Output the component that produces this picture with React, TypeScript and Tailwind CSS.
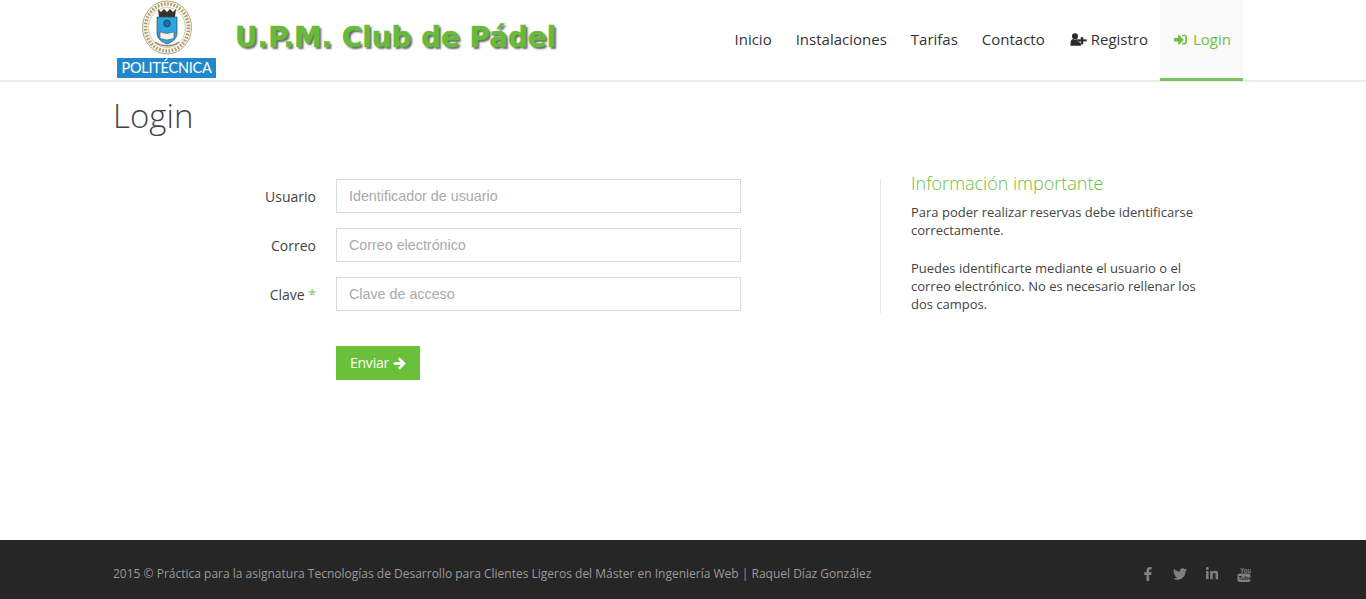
import React from "react";
import { FaSignInAlt, FaArrowRight, FaFacebookF, FaTwitter, FaLinkedinIn } from "react-icons/fa";

function Seal() {
  return (
    <svg width="52" height="56" viewBox="0 0 52 56" className="block">
      <ellipse cx="26" cy="27.5" rx="24.5" ry="26.5" fill="#f8f5ea" stroke="#b3a77f" strokeWidth="1" />
      <ellipse cx="26" cy="27.5" rx="21.5" ry="23.5" fill="none" stroke="#a89c74" strokeWidth="3.4" strokeDasharray="1.6 1.6" />
      <ellipse cx="26" cy="27.5" rx="18.4" ry="20" fill="#fff" stroke="#c2b893" strokeWidth="0.7" />
      <path d="M17 9 L20 12 L23 9 L26 12 L29 9 L32 12 L35 9 L34 17 L18 17 Z" fill="#33322f" />
      <path d="M16 17 H36 V33 C36 39 31 42 26 44 C21 42 16 39 16 33 Z" fill="#2ea3dc" stroke="#2b4a5e" strokeWidth="0.7" />
      <circle cx="26" cy="23.5" r="3.4" fill="#1f6f96" stroke="#17465f" strokeWidth="0.8" />
      <path d="M19 32 L26 33.5 L33 32 V38.5 L26 40 L19 38.5 Z" fill="#f2f2ee" stroke="#555" strokeWidth="0.6" />
      <path d="M14 42 C20 47 32 47 38 42" fill="none" stroke="#8a887c" strokeWidth="1.4" />
    </svg>
  );
}

function UserPlus() {
  return (
    <svg width="17" height="13" viewBox="0 0 17 13" className="block" fill="#2a2a2a">
      <circle cx="5" cy="3.2" r="3" />
      <path d="M0.5 12.8 V10 C0.5 7.6 2 6 3.4 6 Q5 7.4 6.8 6 C8 6 9 6.8 9.6 7.8 V10 H11 V12.8 Z" />
      <path d="M10.7 4 H13.3 V6.2 H16.8 V8.6 H13.3 V11.4 H10.7 V8.6 H7.5 V6.2 H10.7 Z" stroke="#fff" strokeWidth="0.2" />
    </svg>
  );
}

function YoutubeLogo() {
  return (
    <svg width="14" height="15" viewBox="0 0 14 15" className="block" fill="currentColor">
      <text x="3" y="5.6" fontSize="6.5" fontWeight="700" fontFamily="'Liberation Sans', sans-serif">You</text>
      <rect x="0.5" y="6.5" width="13" height="8.5" rx="2" />
      <text x="1.6" y="13" fontSize="5.6" fontWeight="700" fontFamily="'Liberation Sans', sans-serif" fill="#262626">Tube</text>
    </svg>
  );
}

function NavLink({ children, className }: { children: React.ReactNode; className: string }) {
  return (
    <a href="#" className={"flex h-full items-center border-b-[3px] pt-px " + className}>
      {children}
    </a>
  );
}

const plain = "border-transparent px-3 text-[#333]";

function Field({ label, placeholder, star }: { label: string; placeholder: string; star?: boolean }) {
  return (
    <div className="flex items-center">
      <label className="w-[223px] pr-5 text-right text-[14px] text-[#444]">
        {label}
        {star && <span className="text-[#7ac55a]"> *</span>}
      </label>
      <input
        placeholder={placeholder}
        className="h-[34px] w-[405px] border border-[#dadada] bg-white px-3 text-[14.3px] text-[#333] outline-none placeholder:text-[#aaa] [font-family:'Liberation_Sans',sans-serif]"
      />
    </div>
  );
}

export default function App() {
  return (
    <div className="flex min-h-screen flex-col bg-white [font-family:'Open_Sans',sans-serif]">
      <header className="h-[82px] border-b-2 border-[#ececec] bg-white">
        <div className="ml-[113px] flex h-[80px] w-[1130px] items-stretch justify-between">
          <div className="flex">
            <div className="ml-[4px] flex w-[99px] flex-col items-center">
              <div className="h-[57px] overflow-hidden">
                <Seal />
              </div>
              <div className="mt-px flex h-[20px] w-[99px] items-center justify-center bg-[#2288cc] text-[14.5px] tracking-[-0.25px] text-white [font-family:'Lato',sans-serif]">
                POLITÉCNICA
              </div>
            </div>
            <div className="ml-[19px] mt-[19px] text-[27.8px] leading-[38px] font-bold text-[#66bb3a] [-webkit-text-stroke:0.5px_#66bb3a] [font-family:'DejaVu_Sans',sans-serif] [text-shadow:2px_2px_2px_#666]">
              U.P.M. Club de Pádel
            </div>
          </div>
          <nav className="flex h-[81px] items-stretch text-[15px]">
            <NavLink className={plain}>Inicio</NavLink>
            <NavLink className={plain}>Instalaciones</NavLink>
            <NavLink className={plain}>Tarifas</NavLink>
            <NavLink className={plain}>Contacto</NavLink>
            <NavLink className="gap-[4px] border-transparent pl-[13px] pr-3 text-[#333]">
              <UserPlus />
              Registro
            </NavLink>
            <NavLink className="gap-[6px] border-[#7ac55a] bg-[#fafafa] pl-[14px] pr-3 text-[#6cc040]">
              <FaSignInAlt className="text-[13px]" />
              Login
            </NavLink>
          </nav>
        </div>
      </header>

      <main className="ml-[113px] flex-1">
        <h1 className="mt-[11px] text-[33px] leading-[46px] font-light text-[#444]">Login</h1>
        <div className="mt-[40px] flex">
          <form className="flex w-[628px] flex-col gap-[15px]">
            <Field label="Usuario" placeholder="Identificador de usuario" />
            <Field label="Correo" placeholder="Correo electrónico" />
            <Field label="Clave" placeholder="Clave de acceso" star />
            <div className="mt-5 pl-[223px]">
              <button
                type="button"
                className="flex h-[34px] w-[84px] items-center justify-center gap-1 bg-[#6abf3b] pb-0.5 text-[14px] tracking-[-0.2px] text-white"
              >
                Enviar
                <FaArrowRight className="mt-0.5 stroke-[30px] text-[13px]" />
              </button>
            </div>
          </form>
          <aside className="ml-[139px] h-[134px] w-[316px] border-l border-[#e6e6e6] pl-[30px] text-[13px] leading-[18px] text-[#444]">
            <h3 className="-mt-[9px] mb-[7px] text-[18px] leading-[26px] font-light text-[#6cc040]">Información importante</h3>
            <p className="mb-5">Para poder realizar reservas debe identificarse correctamente.</p>
            <p className="-mt-[0.4px] w-[290px] leading-[18.4px]">Puedes identificarte mediante el usuario o el correo electrónico. No es necesario rellenar los dos campos.</p>
          </aside>
        </div>
      </main>

      <footer className="h-[59px] bg-[#262626]">
        <div className="ml-[113px] flex h-full w-[1138px] items-center justify-between pt-[9px] text-[12px] text-[#9a9a9a]">
          <span>2015 © Práctica para la asignatura Tecnologías de Desarrollo para Clientes Ligeros del Máster en Ingeniería Web | Raquel Díaz González</span>
          <div className="flex items-center gap-[18px] text-[14px] text-[#808080]">
            <FaFacebookF />
            <FaTwitter />
            <FaLinkedinIn />
            <YoutubeLogo />
          </div>
        </div>
      </footer>
    </div>
  );
}
